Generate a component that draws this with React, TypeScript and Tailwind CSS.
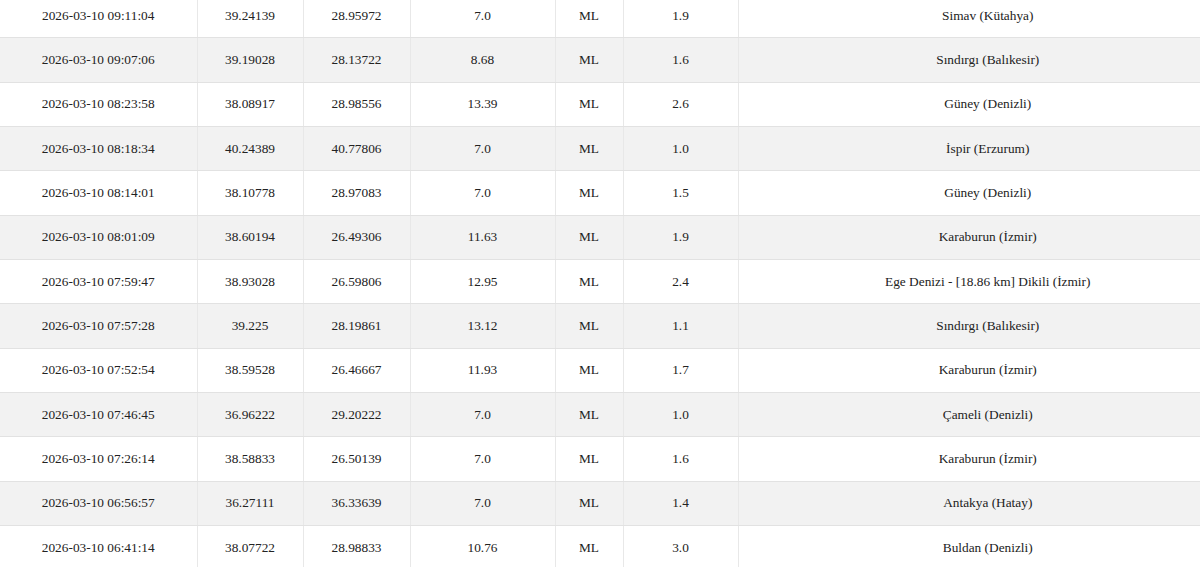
const rows = [
  ["2026-03-10 09:11:04", "39.24139", "28.95972", "7.0", "ML", "1.9", "Simav (Kütahya)"],
  ["2026-03-10 09:07:06", "39.19028", "28.13722", "8.68", "ML", "1.6", "Sındırgı (Balıkesir)"],
  ["2026-03-10 08:23:58", "38.08917", "28.98556", "13.39", "ML", "2.6", "Güney (Denizli)"],
  ["2026-03-10 08:18:34", "40.24389", "40.77806", "7.0", "ML", "1.0", "İspir (Erzurum)"],
  ["2026-03-10 08:14:01", "38.10778", "28.97083", "7.0", "ML", "1.5", "Güney (Denizli)"],
  ["2026-03-10 08:01:09", "38.60194", "26.49306", "11.63", "ML", "1.9", "Karaburun (İzmir)"],
  ["2026-03-10 07:59:47", "38.93028", "26.59806", "12.95", "ML", "2.4", "Ege Denizi - [18.86 km] Dikili (İzmir)"],
  ["2026-03-10 07:57:28", "39.225", "28.19861", "13.12", "ML", "1.1", "Sındırgı (Balıkesir)"],
  ["2026-03-10 07:52:54", "38.59528", "26.46667", "11.93", "ML", "1.7", "Karaburun (İzmir)"],
  ["2026-03-10 07:46:45", "36.96222", "29.20222", "7.0", "ML", "1.0", "Çameli (Denizli)"],
  ["2026-03-10 07:26:14", "38.58833", "26.50139", "7.0", "ML", "1.6", "Karaburun (İzmir)"],
  ["2026-03-10 06:56:57", "36.27111", "36.33639", "7.0", "ML", "1.4", "Antakya (Hatay)"],
  ["2026-03-10 06:41:14", "38.07722", "28.98833", "10.76", "ML", "3.0", "Buldan (Denizli)"],
];

const widths = ["w-[197px]", "w-[106px]", "w-[107px]", "w-[145px]", "w-[68px]", "w-[115px]", "w-[499px]"];

export default function App() {
  return (
    <div className="w-[1200px] h-[567px] overflow-hidden bg-white font-['Liberation_Serif','DejaVu_Serif',serif]">
      <table className="-mt-[7px] w-[1237px] table-fixed border-collapse text-[13.33px] text-[#222] text-center font-['Liberation_Serif','DejaVu_Serif',serif]">
        <colgroup>
          {widths.map((w, i) => (
            <col key={i} className={w} />
          ))}
        </colgroup>
        <tbody>
          {rows.map((r, i) => (
            <tr key={i} className={`h-[44.33px] ${i % 2 === 1 ? "bg-[#f2f2f2]" : "bg-white"}`}>
              {r.map((c, j) => (
                <td
                  key={j}
                  className="border-t border-b border-[#e2e2e2] border-l border-l-[#e8e8e8] first:border-l-0 p-0 align-middle"
                >
                  {c}
                </td>
              ))}
            </tr>
          ))}
        </tbody>
      </table>
    </div>
  );
}
